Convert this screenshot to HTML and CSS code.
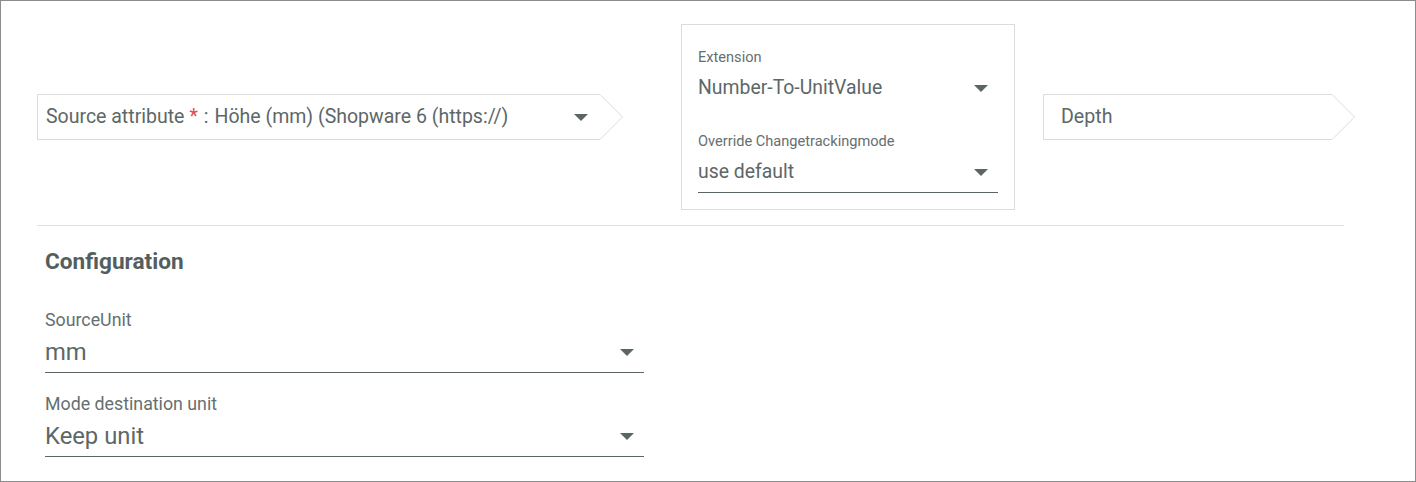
FILE: index.html
```html
<!DOCTYPE html>
<html lang="de">
<head>
<meta charset="utf-8">
<title>Mapping</title>
<link rel="stylesheet" href="styles.css">
</head>
<body>
<div class="frame">
  <div class="top-row">
    <div class="chevron source">
      <div class="chevron-body">
        <span class="src-label">Source attribute</span><span class="req">*</span><span class="colon">:</span>
        <span class="src-value">Höhe (mm) (Shopware 6 (https://)</span>
        <svg class="caret caret-src" width="14" height="7" viewBox="0 0 14 7"><path d="M0 0h14L7 7z"/></svg>
      </div>
      <svg class="chevron-tip" width="24" height="46" viewBox="0 0 24 46"><path d="M0 0.5L22.5 23L0 45.5" fill="none" stroke="#dcdcdc" stroke-width="1"/></svg>
    </div>

    <div class="card">
      <div class="card-field">
        <div class="card-label">Extension</div>
        <div class="card-value"><span>Number-To-UnitValue</span><svg class="caret" width="14" height="7" viewBox="0 0 14 7"><path d="M0 0h14L7 7z"/></svg></div>
      </div>
      <div class="card-field underlined">
        <div class="card-label">Override Changetrackingmode</div>
        <div class="card-value"><span>use default</span><svg class="caret" width="14" height="7" viewBox="0 0 14 7"><path d="M0 0h14L7 7z"/></svg></div>
      </div>
    </div>

    <div class="chevron depth">
      <div class="chevron-body">
        <span class="depth-text">Depth</span>
      </div>
      <svg class="chevron-tip" width="24" height="46" viewBox="0 0 24 46"><path d="M0 0.5L22.5 23L0 45.5" fill="none" stroke="#dcdcdc" stroke-width="1"/></svg>
    </div>
  </div>

  <div class="divider"></div>

  <section class="config">
    <h2 class="config-title">Configuration</h2>
    <div class="field">
      <div class="field-label">SourceUnit</div>
      <div class="field-value"><span>mm</span><svg class="caret" width="14" height="7" viewBox="0 0 14 7"><path d="M0 0h14L7 7z"/></svg></div>
    </div>
    <div class="field">
      <div class="field-label">Mode destination unit</div>
      <div class="field-value"><span>Keep unit</span><svg class="caret" width="14" height="7" viewBox="0 0 14 7"><path d="M0 0h14L7 7z"/></svg></div>
    </div>
  </section>
</div>
</body>
</html>
```

FILE: styles.css
```css
* { box-sizing: border-box; }

html, body {
  margin: 0;
  padding: 0;
  background: #ffffff;
}

body {
  font-family: Roboto, "Liberation Sans", Arial, sans-serif;
  color: #5d6767;
}

.frame {
  width: 1416px;
  height: 482px;
  border: 1px solid #8c8c8c;
  padding: 23px 0 0 36px;
}

.top-row {
  display: flex;
  align-items: center;
  height: 186px;
}

.chevron {
  display: flex;
  height: 46px;
}

.chevron-body {
  display: flex;
  align-items: center;
  height: 46px;
  border: 1px solid #dcdcdc;
  border-right: none;
}

.chevron-tip {
  display: block;
  flex: none;
}

.source .chevron-body {
  width: 563px;
  padding-left: 8px;
  padding-right: 11px;
  font-size: 19.5px;
  line-height: 24px;
}

.src-label { color: #5d6767; }
.req { color: #e04848; margin-left: 5px; }
.colon { margin-left: 6px; }
.src-value { margin-left: 6px; flex: 1; }

.caret {
  display: block;
  flex: none;
  fill: #5b6565;
}

.caret-src { margin-right: 1px; }

.card {
  margin-left: 57px;
  width: 334px;
  height: 186px;
  border: 1px solid #dcdcdc;
  padding: 23px 16px 0 16px;
}

.card-label {
  font-size: 14.6px;
  line-height: 18px;
  color: #666f6f;
}

.card-value {
  display: flex;
  align-items: center;
  justify-content: space-between;
  margin-top: 10px;
  font-size: 19.4px;
  line-height: 24px;
  padding-right: 10px;
}

.card-field + .card-field { margin-top: 32px; }

.card-field.underlined .card-value {
  padding-bottom: 8px;
  border-bottom: 1px solid #5b6565;
}

.depth {
  margin-left: 28px;
}

.depth .chevron-body {
  width: 289px;
  padding-left: 17px;
  font-size: 19.6px;
  line-height: 24px;
}

.divider {
  margin-top: 15px;
  width: 1307px;
  height: 1px;
  background: #e0e0e0;
}

.config {
  padding-left: 8px;
}

.config-title {
  margin: 24px 0 0 0;
  font-size: 22.6px;
  line-height: 24px;
  font-weight: 700;
  color: #545e5e;
}

.field {
  width: 599px;
}

.config-title + .field { margin-top: 36px; }
.field + .field { margin-top: 21px; }

.field-label {
  font-size: 17.8px;
  line-height: 20px;
  color: #666f6f;
}

.field-value {
  display: flex;
  align-items: center;
  justify-content: space-between;
  margin-top: 8px;
  font-size: 23.8px;
  line-height: 28px;
  padding-bottom: 6px;
  padding-right: 10px;
  border-bottom: 1px solid #5b6565;
}
```
